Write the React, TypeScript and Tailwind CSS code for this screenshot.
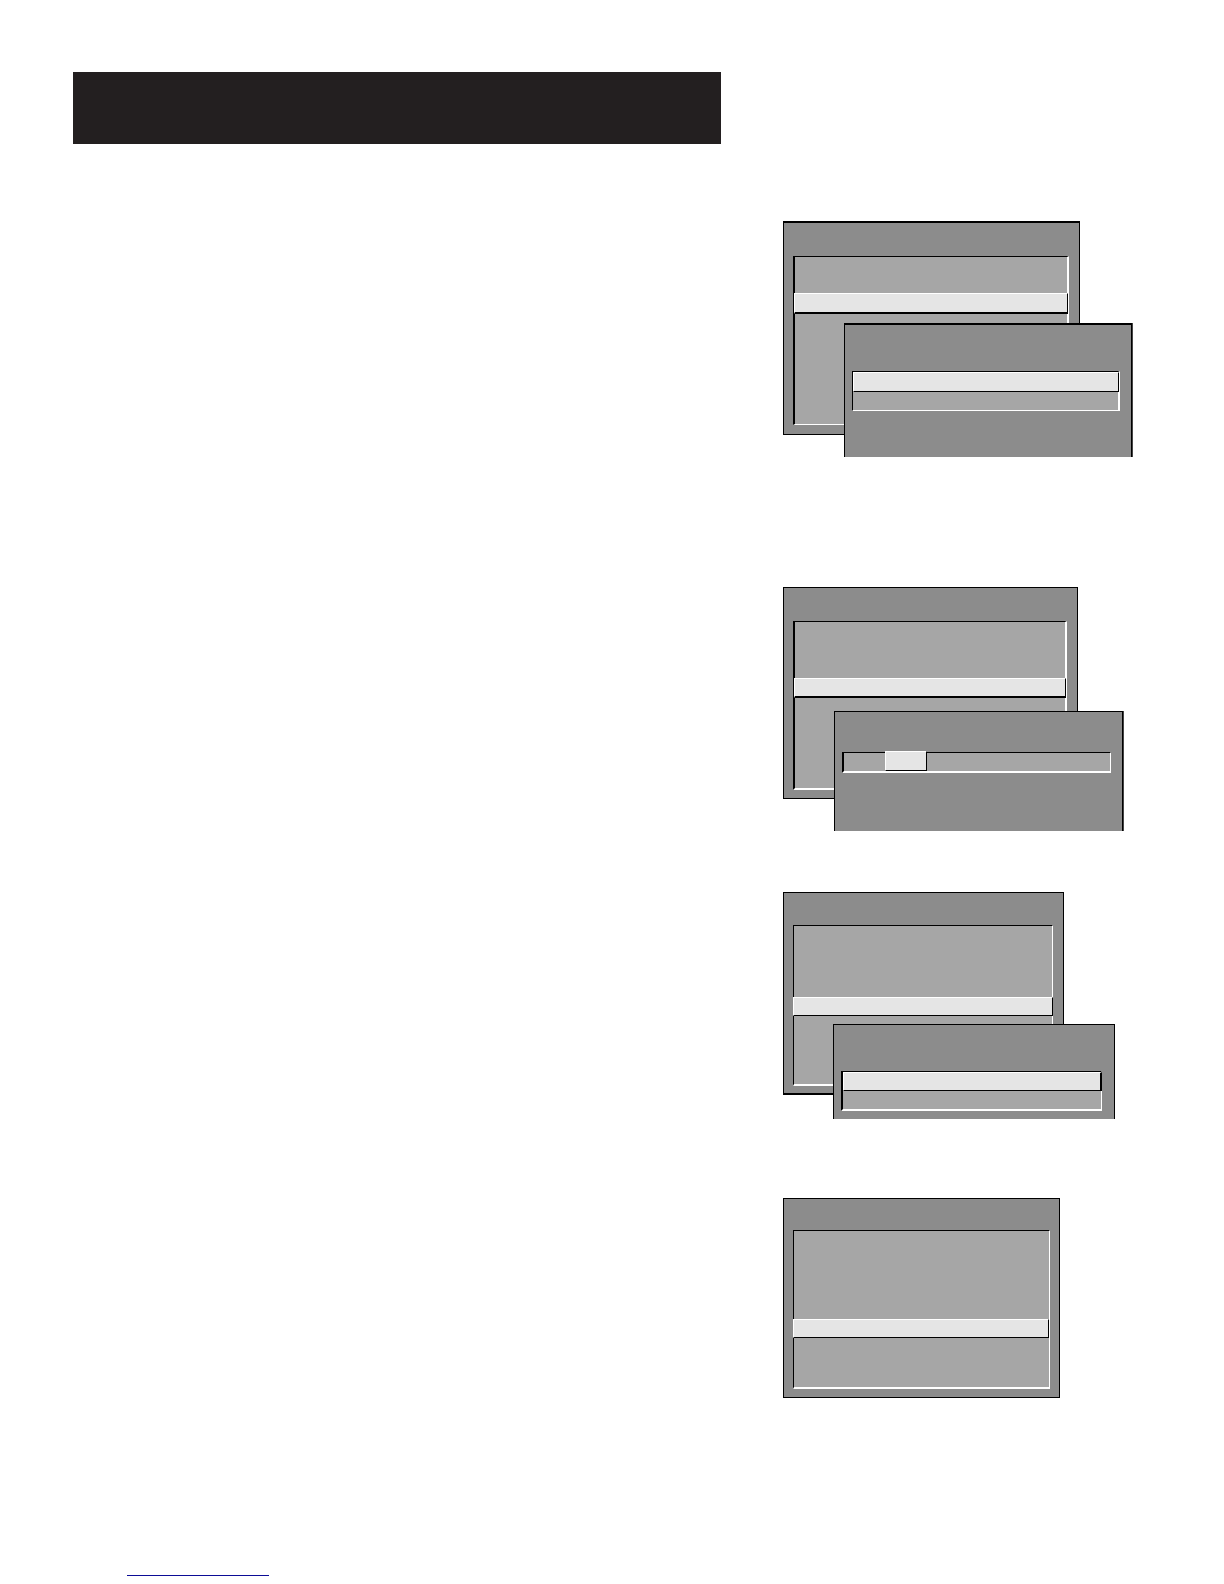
import type { ReactNode } from 'react';
import { clsx } from 'clsx';

type PanelProps = {
  className?: string;
  children?: ReactNode;
};

// Dark grey menu window with a black outline
function Panel({ className, children }: PanelProps) {
  return (
    <div className={clsx('flex flex-col border-black bg-[#8c8c8c]', className)}>
      {children}
    </div>
  );
}

// Sunken list area: black on the top left, white on the bottom right
function Well({ className, children }: PanelProps) {
  return (
    <div
      className={clsx(
        'flex-1 border-t border-t-black border-l-black border-r-white border-b-white bg-[#a6a6a6]',
        className,
      )}
    >
      {children}
    </div>
  );
}

// Raised bar for the selected row
function Selected({ className }: PanelProps) {
  return (
    <div
      className={clsx(
        'border-t border-l border-t-white border-l-white border-r-black border-b-black bg-[#e5e5e5]',
        className,
      )}
    />
  );
}

export default function App() {
  return (
    <div className="bg-white px-[73px] pt-[72px] pb-2">
      <main className="flex items-start gap-[62px]">
        <header className="h-[72px] flex-1 bg-[#231f20]" />

        <section className="w-[368px] shrink-0 pt-[149px]">
          <figure className="relative h-[236px]">
            <Panel className="h-[214px] w-[297px] border border-t-2 pt-[33px] pr-[10px] pb-[9px] pl-[9px]">
              <Well className="border-r-2 border-b border-l-2 pt-9">
                <Selected className="-mx-px h-[21px] border-r border-b-2" />
              </Well>
            </Panel>
            <Panel className="absolute top-[102px] left-[61px] h-[134px] w-[288px] border-x border-t-2 pt-[46px] pr-[11px] pb-[46px] pl-[7px] shadow-[1px_0_0_#444444]">
              <Well className="border-r-2 border-b border-l">
                <Selected className="-mr-px h-5 border-r border-b" />
              </Well>
            </Panel>
          </figure>

          <figure className="relative mt-[130px] h-[244px]">
            <Panel className="h-[212px] w-[295px] border pt-[33px] pr-[10px] pb-[8px] pl-[9px]">
              <Well className="border-r-2 border-b-2 border-l-2 pt-14">
                <Selected className="-mx-px h-5 border-r border-b-2" />
              </Well>
            </Panel>
            <Panel className="absolute top-[124px] left-[51px] h-[120px] w-[289px] border-x border-t pt-[40px] pr-[11px] pb-[58px] pl-[7px] shadow-[1px_0_0_#444444]">
              <Well className="border-r border-b-2 border-l-2">
                <Selected className="-mt-[2px] ml-[41px] h-5 w-[42px] border-r border-b" />
              </Well>
            </Panel>
          </figure>

          <figure className="relative mt-[61px] h-[227px]">
            <Panel className="h-[203px] w-[281px] border border-b-2 pt-[32px] pr-[10px] pb-[7px] pl-[9px]">
              <Well className="border-r border-b-2 border-l pt-[71px]">
                <Selected className="-mx-px h-[19px] border-r border-b" />
              </Well>
            </Panel>
            <Panel className="absolute top-[132px] left-[50px] h-[95px] w-[282px] border-x border-t pt-[46px] pr-[12px] pb-[8px] pl-[7px]">
              <Well className="border-r border-b-2 border-l-2">
                <Selected className="-mr-px h-[19px] border-r-2 border-b" />
              </Well>
            </Panel>
          </figure>

          <figure className="mt-[79px]">
            <Panel className="h-[200px] w-[277px] border pt-[31px] pr-[9px] pb-[8px] pl-[9px]">
              <Well className="border-r border-b-2 border-l pt-[88px]">
                <Selected className="-ml-px h-[19px] border-r border-b" />
              </Well>
            </Panel>
          </figure>
        </section>
      </main>

      <footer className="flex pt-[161px] pl-[54px]">
        <a href="#top" aria-label="Back to top" className="h-[17px] w-[142px] border-b border-b-[#0c0c96]" />
      </footer>
    </div>
  );
}
